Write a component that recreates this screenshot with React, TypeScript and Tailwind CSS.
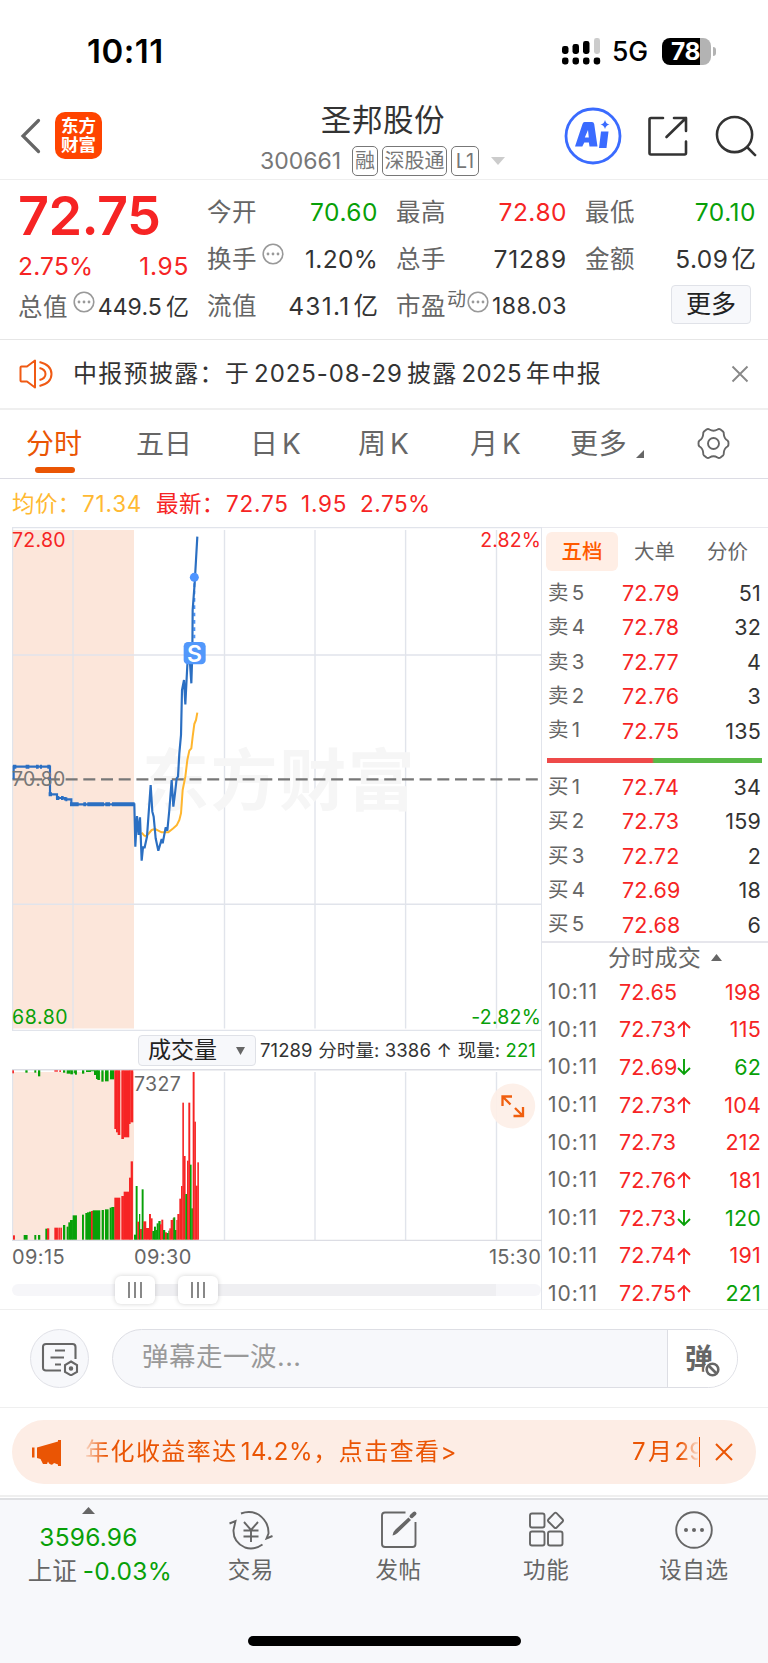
import React from "react";

const RED = "#f62424";
const GREEN = "#08a008";

type Bar = [number, number, number, 0 | 1];

// x, width, edge, rising? (three units per pixel)
const volumeBars: Bar[] = [
  [39, 5, 676, 1], [71, 11, 675, 0], [103, 5, 675, 0], [114, 6, 675, 0], [136, 5, 656, 0], [141, 6, 655, 1],
  [163, 10, 653, 1], [175, 4, 653, 1], [181, 4, 653, 1], [189, 6, 645, 0], [200, 5, 650, 0], [205, 5, 637, 0],
  [210, 8, 630, 0], [218, 12, 616, 0], [246, 5, 614, 0], [256, 5, 609, 0], [261, 6, 607, 0], [267, 6, 605, 0],
  [273, 5, 603, 1], [278, 22, 601, 0], [305, 6, 600, 0], [315, 10, 598, 0], [329, 5, 593, 0], [334, 9, 591, 0],
  [343, 17, 563, 1], [364, 7, 558, 1], [371, 16, 545, 1], [387, 5, 503, 1], [392, 6, 454, 1],
  [402, 6, 674, 0], [407, 5, 528, 0], [412, 5, 635, 1], [417, 3, 612, 0], [420, 5, 657, 1], [425, 5, 538, 0],
  [430, 8, 634, 1], [438, 10, 654, 1], [447, 5, 612, 1], [452, 5, 625, 1], [457, 5, 663, 0], [462, 5, 650, 0],
  [467, 3, 660, 0], [470, 5, 640, 0], [475, 6, 633, 0], [480, 4, 643, 1], [484, 5, 629, 1], [489, 6, 660, 0],
  [495, 5, 667, 1], [500, 5, 669, 0], [505, 3, 662, 0], [508, 4, 655, 1], [512, 6, 630, 1], [518, 3, 625, 1],
  [520, 5, 622, 0], [525, 4, 660, 0], [529, 3, 630, 1], [532, 6, 612, 1], [538, 5, 566, 1], [543, 4, 528, 1],
  [547, 4, 278, 1], [551, 5, 438, 1], [556, 5, 552, 0], [561, 4, 452, 1], [565, 5, 278, 1], [570, 4, 464, 0],
  [574, 4, 595, 0], [578, 5, 186, 1], [583, 4, 335, 1], [587, 5, 527, 1], [592, 4, 457, 1],
];

const unmatchedBars: Bar[] = [
  [37, 4, 190, 1], [76, 6, 188, 0], [103, 5, 188, 0], [114, 6, 199, 0], [163, 10, 185, 1], [178, 4, 186, 1],
  [189, 6, 188, 0], [200, 11, 191, 0], [211, 7, 193, 0], [221, 3, 190, 0], [225, 5, 194, 0], [246, 6, 191, 0],
  [258, 14, 186, 0], [272, 10, 184, 0], [282, 6, 195, 0], [288, 5, 207, 0], [292, 7, 210, 0], [304, 6, 215, 0], [315, 10, 214, 0],
  [330, 12, 208, 0], [343, 5, 357, 1], [348, 5, 367, 1], [353, 7, 375, 1], [364, 7, 387, 1], [371, 16, 382, 1],
  [387, 4, 342, 1], [391, 8, 337, 1],
];

const asks = [["卖5", "72.79", "51"], ["卖4", "72.78", "32"], ["卖3", "72.77", "4"], ["卖2", "72.76", "3"], ["卖1", "72.75", "135"]];
const bids = [["买1", "72.74", "34"], ["买2", "72.73", "159"], ["买3", "72.72", "2"], ["买4", "72.69", "18"], ["买5", "72.68", "6"]];
const trades: [string, "" | "up" | "down", string, boolean][] = [
  ["72.65", "", "198", true], ["72.73", "up", "115", true], ["72.69", "down", "62", false], ["72.73", "up", "104", true],
  ["72.73", "", "212", true], ["72.76", "up", "181", true], ["72.73", "down", "120", false], ["72.74", "up", "191", true],
  ["72.75", "up", "221", false],
];

function StatusBar() {
  return (
    <div className="flex h-[100px] items-center text-black">
      <div className="mt-[4px] ml-[87px] w-[475px] text-[33px] font-semibold tracking-[0.5px]">10:11</div>
      <svg className="mt-[2px]" width="39" height="28" viewBox="0 0 39 28">
        <rect x="0" y="9" width="6.5" height="8" rx="2.4" />
        <rect x="10.5" y="7" width="6.5" height="10" rx="2.4" />
        <rect x="21" y="4" width="6.5" height="13" rx="2.4" />
        <rect x="32" y="1" width="6" height="16" rx="2.4" fill="#ccc" />
        {[0, 10.5, 21, 31.7].map((x) => <rect key={x} x={x} y="20.5" width="6.5" height="7" rx="2.4" />)}
      </svg>
      <div className="mt-[4px] ml-[11px] w-[50px] text-[26.500px] font-medium tracking-[-0.2px]">5G</div>
      <div className="mt-[2px] flex h-[27px] w-[49px] items-center rounded-[8px] bg-[linear-gradient(90deg,#000_0_38.5px,#b3b3b3_38.5px)] pl-[9px] text-[24.500px] leading-[27px] font-bold tracking-[-0.500px] text-white">78</div>
      <div className="mt-[2px] ml-[2px] h-[9px] w-[3px] rounded-r-full bg-[#b3b3b3]" />
    </div>
  );
}

function Tag({ children, className }: { children: React.ReactNode; className: string }) {
  return <div className={`flex h-[30px] items-center justify-center rounded-[5px] border border-[#777] text-[20px] whitespace-nowrap ${className}`}>{children}</div>;
}

function Header() {
  return (
    <header className="flex h-[80px] border-b border-[#eee]">
      <div className="flex w-[260px] pt-[12px] pl-[18px]">
        <svg className="mt-[5px]" width="24" height="38" viewBox="0 0 24 38" fill="none" stroke="#666" strokeWidth="3.2" strokeLinecap="round">
          <path d="M20.500 3.5L5 19l15.500 15.500" />
        </svg>
        <div className="ml-[13px] flex h-[47px] w-[47px] flex-col items-center justify-center rounded-[10px] bg-[#ff4400] text-[17.500px] leading-[18.500px] font-bold text-white">
          <span>东方</span>
          <span>财富</span>
        </div>
      </div>
      <div className="w-[246px]">
        <h1 className="h-[41px] pt-px text-center text-[30.500px] leading-[38px] tracking-[0.6px] text-[#333]">圣邦股份</h1>
        <div className="flex h-[40px] items-center text-[#777]">
          <span className="w-[92px] text-[23px]">300661</span>
          <Tag className="w-[26px]">融</Tag>
          <Tag className="ml-[4px] w-[65px]">深股通</Tag>
          <Tag className="ml-[4px] w-[28px] text-[#777]">L1</Tag>
          <svg className="ml-[12px]" width="14" height="8"><path d="M0 0h14L7 8z" fill="#ccc" /></svg>
        </div>
      </div>
      <div className="flex items-center pb-[7px] pl-[58px]">
        <svg width="58" height="58" viewBox="0 0 58 58">
          <circle cx="29" cy="29" r="27" fill="none" stroke="#3a6bff" strokeWidth="2.800" />
          <path fillRule="evenodd" d="M20.500 15h7.500q1.800 0 2.200 2l3.300 22.500h-8l-.6-4h-4.600l-2 4H11l7.500-22.500q.6-2 2-2zM24 23l-3.200 7.500h4z" fill="#3a6bff" />
          <path d="M37 24.500h7.500l-2 16.500H35zM41 13q1 4 4.500 4.500-3.500.8-4.500 4.500-1-3.700-4.500-4.500Q40 17 41 13z" fill="#3a6bff" />
        </svg>
        <svg className="ml-[25px]" width="42" height="42" viewBox="0 0 42 42" fill="none" stroke="#333" strokeWidth="2.600" strokeLinecap="round" strokeLinejoin="round">
          <path d="M16 3H4Q2.500 3 2.500 4.500V38Q2.500 39.500 4 39.500h33.500Q39 39.500 39 38V26.500M27 3h12v13M39 3L19.500 22" />
        </svg>
        <svg className="ml-[26px]" width="43" height="43" viewBox="0 0 44 44" fill="none" stroke="#333" strokeWidth="2.600" strokeLinecap="round">
          <circle cx="20" cy="20" r="18" /><path d="M33 33l8 8" />
        </svg>
      </div>
    </header>
  );
}

function Dots({ className }: { className: string }) {
  return (
    <svg className={`h-[22px] w-[22px] shrink-0 ${className}`} viewBox="0 0 22 22">
      <circle cx="11" cy="11" r="9.800" fill="none" stroke="#999" strokeWidth="1.600" />
      <circle cx="6" cy="11" r="1.400" fill="#999" /><circle cx="11" cy="11" r="1.400" fill="#999" /><circle cx="16" cy="11" r="1.400" fill="#999" />
    </svg>
  );
}

function Stat({ label, value, unit, color = "text-[#333]", spacing = "tracking-[0.500px]", extra }: { label: string; value: string; unit?: string; color?: string; spacing?: string; extra?: React.ReactNode }) {
  return (
    <div className="flex h-[47px] items-center whitespace-nowrap">
      <span className="text-[24.500px] tracking-[0.500px] text-[#666]">{label}</span>
      {extra}
      <span className={`ml-auto text-[24.500px] ${spacing} ${color}`}>{value}</span>
      {unit && <span className="ml-[3px] text-[24.500px] text-[#333]">{unit}</span>}
    </div>
  );
}

function Quote() {
  return (
    <section className="flex h-[160px] gap-[18px] border-b border-[#e6e6e6] pt-[9px] pl-[18px]">
      <div className="w-[171px] whitespace-nowrap">
        <div className="-mt-px flex h-[54px] items-center text-[54px] font-semibold tracking-[-0.600px] text-[#f62424]">72.75</div>
        <div className="mt-px flex h-[46px] items-center justify-between text-[24.500px] text-[#f62424]"><span className="tracking-[0.200px]">2.75%</span><span className="tracking-[0.700px]">1.95</span></div>
        <div className="flex h-[36px] items-center">
          <span className="text-[24.500px] tracking-[0.500px] text-[#666]">总值</span>
          <Dots className="mb-[10px] ml-[5px]" />
          <span className="ml-auto text-[23px] tracking-[0.100px] text-[#333]">449.5<span className="ml-[4px]">亿</span></span>
        </div>
      </div>
      <div className="w-[171px]">
        <Stat label="今开" value="70.60" color="text-[#08a008]" />
        <Stat label="换手" value="1.20%" spacing="tracking-[0.300px]" extra={<Dots className="mb-[12px] ml-[5px]" />} />
        <Stat label="流值" value="431.1" unit="亿" spacing="tracking-[1.300px]" />
      </div>
      <div className="w-[171px]">
        <Stat label="最高" value="72.80" color="text-[#f62424]" />
        <Stat label="总手" value="71289" spacing="tracking-[0.900px]" />
        <div className="flex h-[47px] items-center whitespace-nowrap">
          <span className="text-[24.500px] tracking-[0.500px] text-[#666]">市盈</span>
          <span className="mb-[13px] ml-px text-[19px] text-[#666]">动</span>
          <Dots className="mb-[10px] ml-px" />
          <span className="ml-auto text-[23px] tracking-[0.500px] text-[#333]">188.03</span>
        </div>
      </div>
      <div className="w-[171px]">
        <Stat label="最低" value="70.10" color="text-[#08a008]" />
        <Stat label="金额" value="5.09" unit="亿" />
        <div className="mt-[2px] ml-[86px] flex h-[39px] w-[80px] items-center justify-center rounded-[4px] border border-[#e0e2e8] bg-[#f7f8fb] pt-px text-[25px] text-[#222]">更多</div>
      </div>
    </section>
  );
}

function Notice() {
  return (
    <section className="flex h-[70px] items-center border-b-2 border-[#efefef] pl-[19px]">
      <svg width="34" height="30" viewBox="0 0 34 30" fill="none" stroke="#f05a14" strokeWidth="2" strokeLinejoin="round">
        <path d="M1.500 8.500Q1.500 7.500 2.500 7.500H8L16 1.500v27L8 22.500H2.500Q1.500 22.500 1.500 21.500zM20.500 3q12 3 12 12t-12 12M20.500 9q6 1.500 6 6t-6 6" />
      </svg>
      <span className="ml-[20px] flex-1 text-[24px] tracking-[1.300px] whitespace-nowrap text-[#333]">
        中报预披露：于<span className="mx-[4px] tracking-[0.900px]">2025-08-29</span>披露<span className="mx-[4px] tracking-[0.400px]">2025</span>年中报
      </span>
      <svg className="mr-[19px]" width="18" height="18" viewBox="0 0 18 18" stroke="#888" strokeWidth="1.900"><path d="M1.500 1.500l15 15M16.500 1.500l-15 15" /></svg>
    </section>
  );
}

function Tabs() {
  return (
    <nav className="flex h-[69px] border-b border-[#dcdce4] text-[28px] leading-[68px] whitespace-nowrap text-[#666]">
      <div className="flex w-[82px] flex-col pl-[26px] text-[#ea5504]">
        <span className="h-[57px]">分时</span>
        <span className="ml-[9px] h-[6px] w-[40px] rounded-full bg-[#ea5504]" />
      </div>
      <div className="ml-[54px] w-[114px]">五日</div>
      <div className="w-[108px]">日<span className="ml-[4px]">K</span></div>
      <div className="w-[112px]">周<span className="ml-[4px]">K</span></div>
      <div className="w-[100px]">月<span className="ml-[4px]">K</span></div>
      <div className="flex w-[127px]">
        <span className="tracking-[0.800px]">更多</span>
        <svg className="mt-[40px] ml-[8px]" width="8" height="8"><path d="M8 0v8H0z" fill="#666" /></svg>
      </div>
      <svg className="mt-[17px]" width="33" height="33" viewBox="0 0 33 33" fill="none" stroke="#666" strokeWidth="1.900" strokeLinejoin="round">
        <path d="M9.500 2.500Q11 1.500 12.500 2.500Q16.500 5 20.500 2.500Q22 1.500 23.500 2.500L26 4.500Q27 5.500 26.800 7Q27 11.500 30.500 13.500Q31.700 14.500 31.500 16.500Q31.700 18.500 30.500 19.500Q27 21.500 26.800 26Q27 27.500 26 28.500L23.500 30.500Q22 31.500 20.500 30.500Q16.500 28 12.500 30.500Q11 31.500 9.500 30.500L7 28.500Q6 27.500 6.200 26Q6 21.500 2.500 19.500Q1.300 18.500 1.500 16.500Q1.300 14.500 2.500 13.500Q6 11.500 6.200 7Q6 5.500 7 4.500z" />
        <circle cx="16.500" cy="16.500" r="5.500" />
      </svg>
    </nav>
  );
}

function Legend() {
  return (
    <div className="flex h-[48px] items-center pt-[2px] pl-[12px] text-[22.500px] tracking-[0.800px] whitespace-nowrap text-[#f62424]">
      <span className="w-[70px] tracking-[0.400px] text-[#ffb932]">均价：</span>
      <span className="w-[74px] text-[#ffb932]">71.34</span>
      <span className="w-[70px] tracking-[0.400px]">最新：</span>
      <span className="w-[75px]">72.75</span>
      <span className="w-[59px]">1.95</span>
      <span className="tracking-[0.500px]">2.75%</span>
    </div>
  );
}

const gridX = [73, 224.5, 315, 405.6, 496.5];

function PriceChart() {
  return (
    <svg className="block" width="530" height="504" viewBox="12 527 530 504">
      <rect x="12" y="530" width="122" height="498.500" fill="#fce6da" />
      <g stroke="#e1e4eb" strokeWidth="1.400">
        {gridX.map((x) => <path key={x} d={`M${x} 530V1028.500`} />)}
        <path d="M12 655H542M12 904.300H542" />
        <path d="M12 527.500H542M12.500 527V1031M12 1030.500H542" />
      </g>
      <text x="142" y="805" fontSize="67" fontWeight="700" letterSpacing="1.600" fill="#f6f6f6">东方财富</text>
      <path d="M12.500 779.300H541" stroke="#777" strokeWidth="2.200" strokeDasharray="12 5.700" />
      <g transform="translate(0 520) scale(.33333)" fill="none" strokeLinejoin="round">
        <path stroke="#ffb62e" strokeWidth="6" d="M425 938L432 946L438 949L445 942L455 930L465 927L475 932L485 937L505 937L520 925L530 916L538 900L543 880L548 810L556 770L562 720L568 692L574 685L578 650L583 612L588 600L592 578" />
        <path stroke="#4d94f7" strokeWidth="6" strokeDasharray="11 11" d="M583 190V366" />
        <path stroke="#2b6fc2" strokeWidth="6.500" strokeLinejoin="miter" strokeMiterlimit="3" d="M41 778V740H150V823H171V834H195V838H214V853H403L406 980L411 888L416 945L420 892L425 1022L429 982L434 982L441 950L452 795L457 875L461 890L467 955L475 992L480 975L485 957L488 970L497 922L502 932L508 870L515 780L520 860L525 820L530 775L534 770L538 700L543 645L546 510L552 480L556 553L562 435L568 400L574 490L577 400L578 270L584 190L588 120L592 50" />
        <path stroke="#2b6fc2" strokeWidth="12" d="M39 740h10M77 740h11M108 740h8M120 740h6M142 740h9M146 823h10M168 834h10M183 834h8M196 838h6M210 853h26M250 853h8M262 853h50M316 853h14M336 853h68" />
        <circle cx="583" cy="172" r="13.500" fill="#4d94ff" />
        <rect x="551" y="366" width="66" height="67" rx="13" fill="#5298fb" />
      </g>
      <text x="194.600" y="661.500" fontSize="23" fontWeight="600" fill="#fff" textAnchor="middle">S</text>
      <g fontSize="19.500">
        <text x="12" y="547" fill={RED} letterSpacing="0.300">72.80</text>
        <text x="12" y="786" fill="#777" letterSpacing="0.300">70.80</text>
        <text x="12" y="1023.500" fill={GREEN} letterSpacing="0.600">68.80</text>
        <text x="541" y="547" fill={RED} textAnchor="end" letterSpacing="0.100">2.82%</text>
        <text x="541" y="1023.500" fill={GREEN} textAnchor="end" letterSpacing="0.200">-2.82%</text>
      </g>
    </svg>
  );
}

function VolumeChart() {
  return (
    <svg className="block" width="530" height="172" viewBox="12 1069 530 172">
      <rect x="12" y="1072" width="122" height="168" fill="#fce6da" />
      <g stroke="#e1e4eb" strokeWidth="1.400">
        {gridX.map((x) => <path key={x} d={`M${x} 1072V1240`} />)}
        <path d="M12.500 1069V1240" />
        <path d="M12 1069.700H542M12 1240.500H542" stroke="#dcdde4" strokeWidth="1.500" />
      </g>
      <g transform="translate(0 1010) scale(.33333)">
        {volumeBars.map(([x, w, y, up]) => <rect key={x} x={x} y={y} width={w + 0.8} height={689 - y} fill={up ? RED : GREEN} />)}
        {unmatchedBars.map(([x, w, y, up]) => <rect key={x} x={x} y={181} width={w + 0.8} height={y - 181} fill={up ? RED : GREEN} />)}
      </g>
      <text x="134" y="1091" fontSize="19.500" letterSpacing="0.400" fill="#666">7327</text>
      <circle cx="512.700" cy="1106" r="22.500" fill="#fdefe7" fillOpacity=".93" />
      <path d="M502.500 1106V1096.500H512M502.500 1096.500L510.500 1104.500M523 1107V1116H513.500M523 1116L515 1108" fill="none" stroke="#f05f0f" strokeWidth="2.300" />
    </svg>
  );
}

function Handle({ className }: { className: string }) {
  return (
    <div className={`flex h-[28px] w-[40px] items-center justify-center gap-[4px] rounded-[6px] bg-white shadow-[0_0_5px_rgba(0,0,0,0.18)] ${className}`}>
      <span className="h-[16px] w-[2px] bg-[#888]" /><span className="h-[16px] w-[2px] bg-[#888]" /><span className="h-[16px] w-[2px] bg-[#888]" />
    </div>
  );
}

function ChartColumn() {
  return (
    <div className="w-[530px] border-r border-[#e1e4eb]">
      <PriceChart />
      <div className="flex h-[38px] items-center pt-px text-[18px] whitespace-nowrap text-[#333]">
        <div className="ml-[126px] flex h-[31px] w-[118px] items-center rounded-[4px] border border-[#dfe1e7] bg-[#f7f8fb] pl-[9px] text-[23px] text-[#222]">
          成交量
          <svg className="ml-[19px]" width="9" height="8"><path d="M0 0h9L4.500 8z" fill="#666" /></svg>
        </div>
        <div className="ml-[4px] flex w-[276px] justify-between text-[18.500px] tracking-[0.100px]">
          <span>71289</span><span>分时量: 3386</span><span>↑</span><span>现量: <span className="text-[#08a008]">221</span></span>
        </div>
      </div>
      <VolumeChart />
      <div className="flex h-[32px] items-center text-[20px] tracking-[0.400px] text-[#666]">
        <span className="w-[122px]">09:15</span>
        <span>09:30</span>
        <span className="ml-auto tracking-[0.200px]">15:30</span>
      </div>
      <div className="flex h-[34px] items-center">
        <div className="flex h-[12px] w-full items-center rounded-full bg-[linear-gradient(90deg,#f6f6f9_0_120px,#efeff2_120px_484px,#f6f6f9_484px)]">
          <Handle className="ml-[103px]" />
          <Handle className="ml-[23px]" />
        </div>
      </div>
    </div>
  );
}

function BookRow({ row }: { row: string[] }) {
  return (
    <div className="flex h-[34.400px] items-center text-[21.500px] tracking-[0.200px] whitespace-nowrap">
      <span className="w-[74px] text-[20.500px] text-[#666]">{row[0][0]}<span className="ml-[3px]">{row[0][1]}</span></span>
      <span className="text-[#f62424]">{row[1]}</span>
      <span className="ml-auto text-[#333]">{row[2]}</span>
    </div>
  );
}

function OrderBook() {
  return (
    <div className="h-[782px] flex-1 overflow-hidden">
      <div className="flex h-[49px] border-t border-[#e9e9ee] pt-[4px] pl-[4px] text-[20.500px] text-[#666]">
        <div className="flex h-[39px] w-[72px] items-center justify-center rounded-[6px] bg-[#ffeee5] pt-px font-medium text-[#ff5a00]">五档</div>
        <div className="flex h-[39px] w-[73px] items-center justify-center pt-px">大单</div>
        <div className="flex h-[39px] w-[73px] items-center justify-center pt-px">分价</div>
      </div>
      <div className="pr-[7px] pl-[6px]">
        {asks.map((r) => <BookRow key={r[0]} row={r} />)}
      </div>
      <div className="mt-[10px] mr-[6px] mb-[7px] ml-[5px] h-[5px] bg-[linear-gradient(90deg,#ee4a49_0_105px,#58b947_107px)]" />
      <div className="pr-[7px] pl-[6px]">
        {bids.map((r) => <BookRow key={r[0]} row={r} />)}
      </div>
      <div className="-mt-px flex h-[32px] items-center justify-center gap-[10px] border-t-2 border-[#e6e6ec] pl-[20px] text-[23px] tracking-[0.300px] text-[#666]">
        分时成交
        <svg width="11" height="7"><path d="M0 7h11L5.500 0z" fill="#666" /></svg>
      </div>
      <div className="pr-[7px] pl-[6px]">
        {trades.map(([price, dir, vol, up], i) => (
          <div key={i} className="flex h-[37.700px] items-center text-[21.500px] tracking-[0.200px]">
            <span className="w-[71px] text-[21px] tracking-[1px] text-[#666]">10:11</span>
            <span className="w-[58px] text-[#f62424]">{price}</span>
            <svg width="14" height="18" viewBox="0 0 14 18" fill="none" stroke={dir === "up" ? RED : GREEN} strokeWidth="1.900">
              {dir === "up" && <path d="M7 17V2M1 8L7 2L13 8" />}
              {dir === "down" && <path d="M7 1V16M1 10L7 16L13 10" />}
            </svg>
            <span className={up ? "ml-auto text-[#f62424]" : "ml-auto text-[#08a008]"}>{vol}</span>
          </div>
        ))}
      </div>
    </div>
  );
}

function CommentBar() {
  return (
    <section className="flex h-[99px] items-center border-y border-[#efefef] pl-[30px]">
      <div className="flex h-[59px] w-[59px] items-center justify-center rounded-full border border-[#e0e1e7] bg-[#f7f8fb]">
        <svg width="38" height="34" viewBox="0 0 38 34" fill="none" stroke="#666" strokeWidth="2.100">
          <path d="M20 28.500H5Q2 28.500 2 25.500V5Q2 2 5 2H31.500Q34.500 2 34.500 5V17M14 8.500H24M9.500 15.500H23M14 22.500H20" />
          <path d="M30 19.500L36 23V30L30 33.300L24 30V23z" /><circle cx="30" cy="26.500" r="1.200" fill="#666" />
        </svg>
      </div>
      <div className="ml-[23px] flex h-[59px] w-[626px] items-center overflow-hidden rounded-full border border-[#dddee4] bg-[#f7f8fb]">
        <span className="flex-1 pb-[4px] pl-[29px] text-[26.500px] tracking-[0.500px] text-[#999]">弹幕走一波...</span>
        <div className="flex h-full w-[70px] items-center border-l border-[#dddee4] bg-white pl-[17px]">
          <div className="relative text-[28px] leading-[28px] font-bold text-[#666]">
            弹
            <svg className="absolute top-[16px] left-[19px]" width="17" height="17" viewBox="0 0 17 17">
              <circle cx="8.500" cy="8.500" r="8.500" fill="#fff" />
              <g fill="none" stroke="#666" strokeWidth="2.600"><circle cx="8.500" cy="8.500" r="5.800" /><path d="M4.500 4.500l8 8" /></g>
            </svg>
          </div>
        </div>
      </div>
    </section>
  );
}

function Banner() {
  return (
    <div className="h-[87px] px-[12px] pt-[12px]">
      <div className="flex h-[64px] items-center rounded-full bg-[#fdede5] text-[24px] whitespace-nowrap text-[#ea5504]">
        <svg className="ml-[19px]" width="31" height="27" viewBox="0 0 31 27" fill="#ea5504">
          <path d="M1 8.500h2.500v10H1zM6 8.500L27 2.500V1h3v26h-3v-1.500L23 24q-2 3-5 .500l-1-2-1 2.500h-4L9.500 20 6 19z" />
        </svg>
        <div className="ml-[20px] flex w-[616px] [mask-image:linear-gradient(90deg,transparent,black_24px,black_598px,transparent_618px)]">
          <span className="w-[550px] shrink-0 pl-[3px] tracking-[1.450px]">年化收益率达<span className="ml-[3px] tracking-[0.600px]">14.2%</span>，点击查看&gt;</span>
          <span>7<span className="mx-[2.500px]">月</span>29</span>
        </div>
        <span className="ml-px h-[30px] w-px bg-[#ea5504]" />
        <svg className="ml-[15px]" width="18" height="18" viewBox="0 0 18 18" stroke="#ea5504" strokeWidth="2"><path d="M1 1l16 16M17 1L1 17" /></svg>
      </div>
    </div>
  );
}

function NavItem({ label, children }: { label: string; children: React.ReactNode }) {
  return (
    <div className="flex w-[147.700px] flex-col items-center pt-[9px]">
      <svg width="44" height="42" viewBox="0 0 44 42" fill="none" stroke="#666" strokeWidth="1.900">{children}</svg>
      <span className="mt-px text-[22.500px] leading-[36px] tracking-[0.600px] text-[#666]">{label}</span>
    </div>
  );
}

function BottomNav() {
  return (
    <footer className="h-[169px] border-t-2 border-[#efefef] bg-white pt-px">
      <div className="flex h-[166px] flex-col border-t-2 border-[#dfe0e3] bg-[#f7f8fb]">
        <div className="flex h-[136px]">
          <div className="flex w-[177px] flex-col items-center pt-[7px] whitespace-nowrap">
            <svg width="13" height="7"><path d="M0 7h13L6.500 0z" fill="#666" /></svg>
            <span className="mt-[6px] text-[24.500px] leading-[34px] tracking-[0.200px] text-[#08a008]">3596.96</span>
            <span className="pl-[23px] text-[24.500px] leading-[34px] text-[#666]">上证<span className="ml-[6px] tracking-[0.400px] text-[#08a008]">-0.03%</span></span>
          </div>
          <NavItem label="交易">
            <path d="M12 4.500Q21 1 29.500 5.500Q40 13 39.500 24.500L37.500 29.500L43.500 27M33.500 35.500Q25 41.500 16 38.500Q4 33 4.500 21L6.500 12L.500 14.500" />
            <path d="M15 13l7 8 7-8M14.500 21.500H29.500M14.500 27.500H29.500M22 21V33" />
          </NavItem>
          <NavItem label="发帖">
            <path d="M28.500 3.500H8Q5 3.500 5 6.500V35Q5 38 8 38H35.500Q38.500 38 38.500 35V13" />
            <path d="M15.500 26.500Q16 22.500 18.500 20.500L31.500 8.500L34 11L20.500 24Q18 26 15.500 26.500z" fill="#666" stroke="none" /><path d="M34.500 7.200L37.500 4.500" strokeWidth="4" strokeLinecap="round" />
          </NavItem>
          <NavItem label="功能">
            <rect x="6" y="4.500" width="14.500" height="14" rx="2" /><rect x="6" y="22.500" width="14.500" height="14" rx="2" /><rect x="24" y="22.500" width="14.500" height="14" rx="2" />
            <path d="M30.500 4.200Q31.500 3.200 32.500 4.200L38.700 10.500Q39.500 11.500 38.700 12.500L32.500 18.700Q31.500 19.500 30.500 18.700L24.300 12.500Q23.500 11.500 24.300 10.500z" />
          </NavItem>
          <NavItem label="设自选">
            <circle cx="22" cy="21" r="17.800" />
            <g fill="#666" stroke="none"><circle cx="14" cy="21" r="2" /><circle cx="22" cy="21" r="2" /><circle cx="30" cy="21" r="2" /></g>
          </NavItem>
        </div>
        <div className="ml-[248px] h-[10px] w-[273px] rounded-full bg-black" />
      </div>
    </footer>
  );
}

export default function App() {
  return (
    <div className="h-[1663px] w-[768px] overflow-hidden bg-white font-['Inter','Noto_Sans_CJK_SC',sans-serif]">
      <StatusBar />
      <Header />
      <Quote />
      <Notice />
      <Tabs />
      <Legend />
      <main className="flex h-[782px] pl-[12px]">
        <ChartColumn />
        <OrderBook />
      </main>
      <CommentBar />
      <Banner />
      <BottomNav />
    </div>
  );
}
